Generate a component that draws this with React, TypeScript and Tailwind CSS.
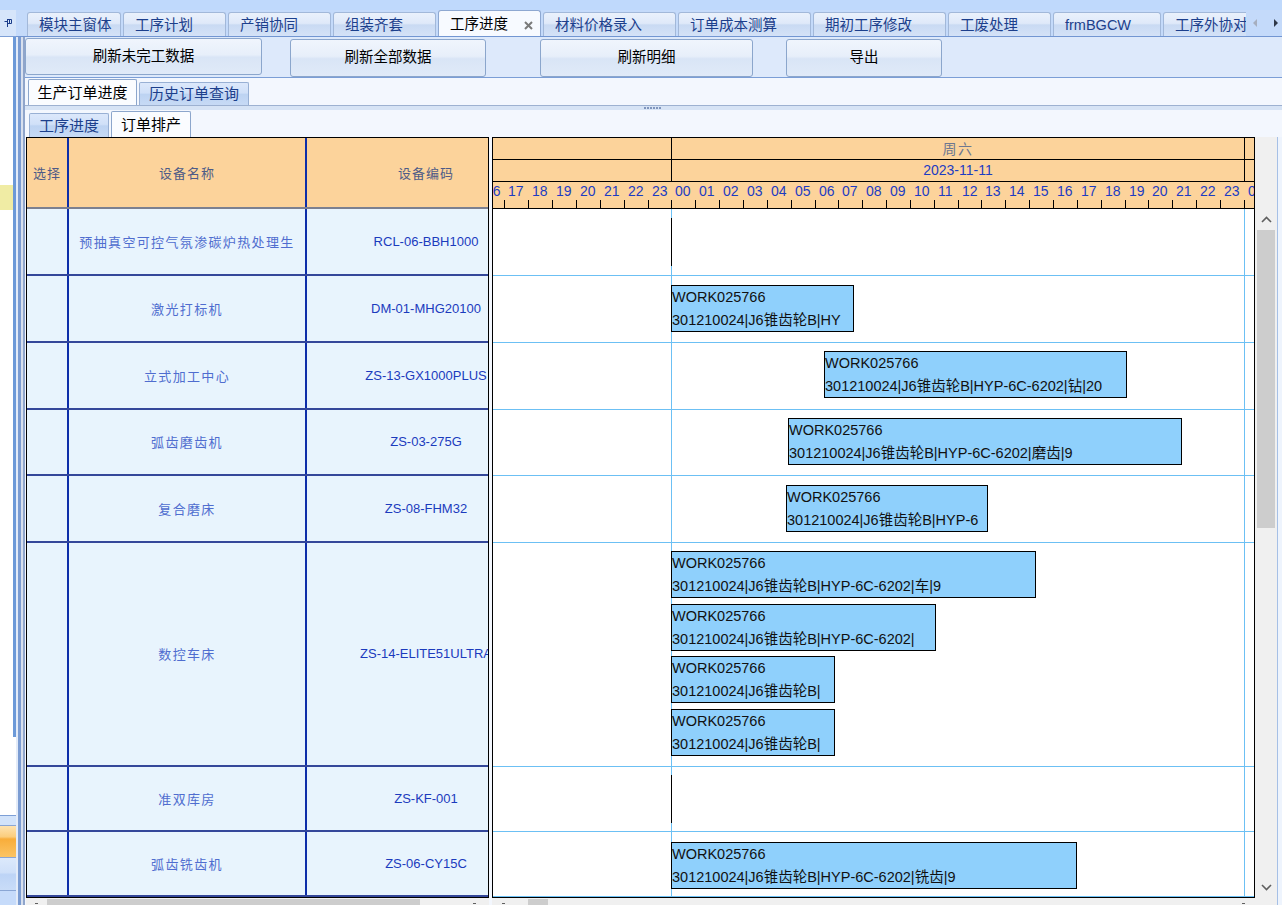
import React from "react";

type Bar = { left: number; width: number; top: number; text?: string };
type Row = { name: string; code: string; h: number; bars: Bar[] };

const ROWS: Row[] = [
  { name: "预抽真空可控气氛渗碳炉热处理生", code: "RCL-06-BBH1000", h: 67, bars: [{ left: 178, width: 0, top: 9 }] },
  { name: "激光打标机", code: "DM-01-MHG20100", h: 67, bars: [{ left: 178, width: 183, top: 9, text: "301210024|J6锥齿轮B|HY" }] },
  { name: "立式加工中心", code: "ZS-13-GX1000PLUS", h: 67, bars: [{ left: 331, width: 303, top: 8, text: "301210024|J6锥齿轮B|HYP-6C-6202|钻|20" }] },
  { name: "弧齿磨齿机", code: "ZS-03-275G", h: 66, bars: [{ left: 295, width: 394, top: 8, text: "301210024|J6锥齿轮B|HYP-6C-6202|磨齿|9" }] },
  { name: "复合磨床", code: "ZS-08-FHM32", h: 67, bars: [{ left: 293, width: 202, top: 9, text: "301210024|J6锥齿轮B|HYP-6" }] },
  {
    name: "数控车床",
    code: "ZS-14-ELITE51ULTRA",
    h: 224,
    bars: [
      { left: 178, width: 365, top: 8, text: "301210024|J6锥齿轮B|HYP-6C-6202|车|9" },
      { left: 178, width: 265, top: 61, text: "301210024|J6锥齿轮B|HYP-6C-6202|" },
      { left: 178, width: 164, top: 113, text: "301210024|J6锥齿轮B|" },
      { left: 178, width: 164, top: 166, text: "301210024|J6锥齿轮B|" },
    ],
  },
  { name: "准双库房", code: "ZS-KF-001", h: 65, bars: [{ left: 178, width: 0, top: 8 }] },
  { name: "弧齿铣齿机", code: "ZS-06-CY15C", h: 65, bars: [{ left: 178, width: 406, top: 10, text: "301210024|J6锥齿轮B|HYP-6C-6202|铣齿|9" }] },
];

const TABS = [
  { t: "模块主窗体", cls: "w-[94px]" },
  { t: "工序计划", cls: "w-[103px]" },
  { t: "产销协同", cls: "w-[103px]" },
  { t: "组装齐套", cls: "w-[103px]" },
  { t: "工序进度", cls: "w-[103px]", active: true },
  { t: "材料价格录入", cls: "w-[133px]" },
  { t: "订单成本测算", cls: "w-[133px]" },
  { t: "期初工序修改", cls: "w-[133px]" },
  { t: "工废处理", cls: "w-[103px]" },
  { t: "frmBGCW", cls: "w-[108px]" },
  { t: "工序外协对账", cls: "w-[120px]" },
];

const HW = 23.85;
const DAY0 = 178.4;
const TICKS: { x: number; label: string }[] = [];
for (let k = -8; k <= 24; k++) {
  const hour = ((k % 24) + 24) % 24;
  TICKS.push({ x: Math.round(DAY0 + k * HW), label: String(hour).padStart(2, "0") });
}

const inactiveTab =
  "bg-[linear-gradient(to_bottom,#eaf1fc_0%,#dfe9f9_45%,#c9daf3_52%,#d4e2f7_100%)] border border-b-0 border-[#a2b8d9] text-[#1c3f8c]";
const btn =
  "shrink-0 rounded-[3px] border border-[#8ba6cc] bg-[linear-gradient(to_bottom,#f0f5fd_0%,#e7effa_45%,#d9e5f6_52%,#e0eaf8_100%)] flex items-center justify-center text-[14.5px] text-black";

function Pin() {
  return (
    <svg width="9" height="10" viewBox="0 0 9 10" className="block">
      <path d="M3.5 1v8" stroke="#1b3d8a" strokeWidth="1" />
      <path d="M3.5 1.5h4v4h-4" fill="none" stroke="#1b3d8a" strokeWidth="1" />
      <path d="M5.5 2v3" stroke="#1b3d8a" strokeWidth="1" />
      <path d="M0.5 3.5h3" stroke="#1b3d8a" strokeWidth="1" />
    </svg>
  );
}

function ChevronUp() {
  return (
    <svg width="11" height="7" viewBox="0 0 11 7" className="block">
      <path d="M1 6l4.5-4.5L10 6" fill="none" stroke="#5f5f5f" strokeWidth="1.6" />
    </svg>
  );
}
function ChevronDown() {
  return (
    <svg width="11" height="7" viewBox="0 0 11 7" className="block">
      <path d="M1 1l4.5 4.5L10 1" fill="none" stroke="#5f5f5f" strokeWidth="1.6" />
    </svg>
  );
}

export default function App() {
  return (
    <div className="w-[1282px] h-[905px] overflow-hidden bg-[#c4dafa] flex flex-col font-['Liberation_Sans','Noto_Sans_CJK_SC',sans-serif]">
      <div className="h-[10px] shrink-0 bg-[#bfd9fc]" />
      <div className="flex h-[895px]">
        {/* left docked sidebar */}
        <div className="w-[16px] shrink-0 flex flex-col">
          <div className="h-[27px] shrink-0 bg-[#d6e5fa] border-b border-[#7d9fd6] flex items-center justify-center">
            <Pin />
          </div>
          <div className="h-[700px] shrink-0 bg-white border-r-[3px] border-[#6c99d8] flex flex-col">
            <div className="h-[148px] shrink-0" />
            <div className="h-[25px] shrink-0 bg-[#f0eca4]" />
          </div>
          <div className="h-[78px] shrink-0 bg-white" />
          <div className="h-[90px] shrink-0 flex flex-col">
            <div className="h-px bg-[#7d9fd6]" />
            <div className="h-[9px] bg-[#d2e3fa]" />
            <div className="h-px bg-[#8aa6d4]" />
            <div className="h-[31px] bg-[linear-gradient(to_bottom,#fee3b0_0%,#fbcd7c_35%,#f8ad3a_42%,#fbc464_100%)]" />
            <div className="h-px bg-[#8aa6d4]" />
            <div className="h-[32px] bg-[linear-gradient(to_bottom,#dce9fb_0%,#cfe0f9_45%,#bdd4f6_52%,#c9dcf8_100%)]" />
            <div className="h-px bg-[#8aa6d4]" />
            <div className="h-[14px] bg-[#c6dbfa]" />
          </div>
        </div>

        {/* main */}
        <div className="w-[1266px] shrink-0 flex flex-col">
          {/* top tab strip */}
          <div className="h-[27px] shrink-0 flex border-b border-[#7296d2] pl-[11px]">
            <div className="w-[1219px] shrink-0 overflow-hidden flex items-end gap-[2px]">
              {TABS.map((tab) =>
                tab.active ? (
                  <div
                    key={tab.t}
                    className={`${tab.cls} relative h-[26px] shrink-0 rounded-t-[3px] border border-b-0 border-[#8ea8d1] bg-[#f7faff] flex items-center pl-[11px] pt-[2px] text-[14.5px] text-black whitespace-nowrap`}
                  >
                    {tab.t}
                    <svg width="9" height="9" viewBox="0 0 9 9" className="absolute left-[85px] top-[10px]">
                      <path d="M1 1l7 7M8 1l-7 7" stroke="#7a7a7a" strokeWidth="2" />
                    </svg>
                  </div>
                ) : (
                  <div
                    key={tab.t}
                    className={`${tab.cls} ${inactiveTab} h-[24px] shrink-0 rounded-t-[3px] flex items-center pl-[11px] pt-[2px] text-[14.5px] whitespace-nowrap`}
                  >
                    {tab.t}
                  </div>
                )
              )}
            </div>
            <div className="flex-1 flex items-center pl-[7px]">
              <div className="w-0 h-0 border-y-[4px] border-y-transparent border-r-[4px] border-r-[#a6aebe]" />
              <div className="ml-[17px] w-0 h-0 border-y-[4px] border-y-transparent border-l-[4px] border-l-[#2f3848]" />
            </div>
          </div>

          <div className="flex h-[868px]">
            {/* window edge stripes */}
            <div className="w-[9px] shrink-0 flex">
              <div className="w-[2px] bg-[#e3ebf8]" />
              <div className="w-[3px] bg-[#7b9cd2]" />
              <div className="w-[2px] bg-[#d8e0ee]" />
              <div className="w-[2px] bg-[#8fa5cb]" />
            </div>

            {/* content */}
            <div className="w-[1257px] shrink-0 flex flex-col">
              {/* toolbar */}
              <div className="h-[41px] shrink-0 flex items-start bg-[#dde9fb] border-b border-[#7b9ed6]">
                <div className={`${btn} mt-[1px] h-[37px] w-[237px]`}>刷新未完工数据</div>
                <div className={`${btn} ml-[28px] mt-[2px] h-[38px] w-[196px]`}>刷新全部数据</div>
                <div className={`${btn} ml-[54px] mt-[2px] h-[38px] w-[213px]`}>刷新明细</div>
                <div className={`${btn} ml-[33px] mt-[2px] h-[38px] w-[156px]`}>导出</div>
              </div>

              {/* sub tabs */}
              <div className="h-[28px] shrink-0 bg-[#f3f7fe] border-b border-[#9db1d1] flex items-end pl-[3px] gap-[2px]">
                <div className="w-[109px] h-[26px] shrink-0 rounded-t-[2px] border border-b-0 border-[#8ca6cc] bg-[#fafcff] flex items-center justify-center pt-px text-[15px] text-black">
                  生产订单进度
                </div>
                <div className="w-[110px] h-[23px] shrink-0 rounded-t-[2px] border border-b-0 border-[#98b0d4] bg-[linear-gradient(to_bottom,#dce8fb_0%,#d0e0f8_45%,#bdd3f2_52%,#c7daf5_100%)] flex items-center justify-center pt-px text-[15px] text-[#1c3f8c]">
                  历史订单查询
                </div>
              </div>

              {/* splitter */}
              <div className="h-[4px] shrink-0 bg-[#d6e3f5] flex items-center pl-[619px] gap-[1px]">
                <div className="w-[2px] h-[2px] bg-[#7f95bd]" />
                <div className="w-[2px] h-[2px] bg-[#7f95bd]" />
                <div className="w-[2px] h-[2px] bg-[#7f95bd]" />
                <div className="w-[2px] h-[2px] bg-[#7f95bd]" />
                <div className="w-[2px] h-[2px] bg-[#7f95bd]" />
                <div className="w-[2px] h-[2px] bg-[#7f95bd]" />
              </div>

              {/* inner tabs */}
              <div className="h-[27px] shrink-0 bg-[#f3f7fe] flex items-end pl-[4px] gap-[2px]">
                <div className="w-[80px] h-[24px] shrink-0 rounded-t-[2px] border border-b-0 border-[#98b0d4] bg-[linear-gradient(to_bottom,#dce8fb_0%,#d0e0f8_45%,#bdd3f2_52%,#c7daf5_100%)] flex items-center justify-center pt-px text-[15px] text-[#1c3f8c]">
                  工序进度
                </div>
                <div className="w-[80px] h-[26px] shrink-0 rounded-t-[2px] border border-b-0 border-[#8ca6cc] bg-[#fafcff] flex items-center justify-center pt-px text-[15px] text-black">
                  订单排产
                </div>
              </div>

              {/* grid area */}
              <div className="h-[768px] shrink-0 flex bg-[#f3f7fe] pl-[1px]">
                {/* left grid */}
                <div className="w-[463px] shrink-0 flex flex-col">
                  <div className="h-[761px] shrink-0 border border-black overflow-hidden flex flex-col">
                    <div className="h-[71px] shrink-0 flex bg-[#fcd39b] border-b-2 border-[#7c8090] text-[13px] tracking-[1px] text-[#4e5b87] font-['Noto_Sans_CJK_SC',sans-serif]">
                      <div className="w-[42px] shrink-0 border-r-2 border-[#0d2ea9] flex items-center justify-center">选择</div>
                      <div className="w-[238px] shrink-0 border-r-2 border-[#0d2ea9] flex items-center justify-center">设备名称</div>
                      <div className="w-[238px] shrink-0 flex items-center justify-center">设备编码</div>
                    </div>
                    {ROWS.map((r) => (
                      <div
                        key={r.code}
                        className="flex shrink-0 bg-[#e8f4fd] border-b-2 border-[#34479a]"
                        style={{ height: r.h }}
                      >
                        <div className="w-[42px] shrink-0 border-r-2 border-[#0d2ea9]" />
                        <div className="w-[238px] shrink-0 border-r-2 border-[#0d2ea9] flex items-center justify-center whitespace-nowrap overflow-hidden text-[13px] tracking-[1.35px] text-[#4f6dcf] font-['Noto_Sans_CJK_SC',sans-serif]">
                          {r.name}
                        </div>
                        <div className="w-[238px] shrink-0 flex items-center justify-center whitespace-nowrap text-[13px] text-[#1b3bbd]">
                          {r.code}
                        </div>
                      </div>
                    ))}
                  </div>
                  <div className="h-[7px] shrink-0 bg-[#f0f0f0] flex items-start">
                    <div className="ml-[9px] mt-[5px] w-[3px] h-px bg-[#606060]" />
                    <div className="ml-[9px] mt-px w-[373px] h-[6px] bg-[#cdcdcd]" />
                    <div className="ml-auto mr-[13px] mt-[5px] w-[3px] h-px bg-[#606060]" />
                  </div>
                </div>

                <div className="w-[3px] shrink-0" />

                {/* gantt */}
                <div className="w-[763px] shrink-0 flex flex-col">
                  <div className="h-[761px] shrink-0 border border-black overflow-hidden flex flex-col bg-white">
                    <div className="h-[22px] shrink-0 flex bg-[#fcd39b] border-b border-black">
                      <div className="w-[178px] shrink-0" />
                      <div className="w-[574px] shrink-0 border-x border-black flex items-center justify-center text-[14px] tracking-[1.5px] text-[#6d7790] font-['Noto_Sans_CJK_SC',sans-serif]">
                        周六
                      </div>
                    </div>
                    <div className="h-[22px] shrink-0 flex bg-[#fcd39b] border-b border-black">
                      <div className="w-[178px] shrink-0" />
                      <div className="w-[574px] shrink-0 border-x border-black flex items-center justify-center text-[14px] text-[#1c3cc2]">
                        2023-11-11
                      </div>
                    </div>
                    <div className="h-[27px] shrink-0 relative bg-[#fcd39b] border-b border-black overflow-hidden">
                      {TICKS.map((t, i) => (
                        <React.Fragment key={i}>
                          <div className="absolute top-[18px] h-[8px] w-px bg-black" style={{ left: t.x }} />
                          <div
                            className="absolute top-[1px] leading-[16px] text-[14px] text-[#1c3cc2] whitespace-nowrap"
                            style={{ left: t.x + 4 }}
                          >
                            {t.label}
                          </div>
                        </React.Fragment>
                      ))}
                    </div>
                    <div className="flex-1 relative flex flex-col">
                      <div className="absolute top-0 bottom-0 left-[178px] w-px bg-[#6cc0f4]" />
                      <div className="absolute top-0 bottom-0 left-[751px] w-px bg-[#6cc0f4]" />
                      {ROWS.map((r) => (
                        <div
                          key={r.code}
                          className="relative shrink-0 border-b border-[#6cc0f4]"
                          style={{ height: r.h }}
                        >
                          {r.bars.map((b, i) =>
                            b.width === 0 ? (
                              <div
                                key={i}
                                className="absolute w-px h-[48px] bg-black"
                                style={{ left: b.left, top: b.top }}
                              />
                            ) : (
                              <div
                                key={i}
                                className="absolute h-[47px] border border-black bg-[#8fd0fc] overflow-hidden whitespace-nowrap text-[14.5px] leading-[23px] text-[#111111]"
                                style={{ left: b.left, top: b.top, width: b.width }}
                              >
                                <div>WORK025766</div>
                                <div>{b.text}</div>
                              </div>
                            )
                          )}
                        </div>
                      ))}
                    </div>
                  </div>
                  <div className="h-[7px] shrink-0 bg-[#f0f0f0] flex items-start">
                    <div className="ml-[10px] mt-[5px] w-[3px] h-px bg-[#606060]" />
                    <div className="ml-[23px] mt-px w-[20px] h-[6px] bg-[#cdcdcd]" />
                    <div className="ml-auto mr-[10px] mt-[5px] w-[3px] h-px bg-[#606060]" />
                  </div>
                </div>

                {/* vertical scrollbar */}
                <div className="w-[22px] shrink-0 flex flex-col bg-[#f0f0f0]">
                  <div className="h-[72px] shrink-0" />
                  <div className="h-[21px] shrink-0 flex items-center justify-center">
                    <ChevronUp />
                  </div>
                  <div className="h-[298px] shrink-0 mx-[2px] bg-[#cdcdcd]" />
                  <div className="flex-1" />
                  <div className="h-[20px] shrink-0 flex items-center justify-center">
                    <ChevronDown />
                  </div>
                  <div className="h-[8px] shrink-0" />
                </div>
                <div className="w-px shrink-0 bg-[#a6c0e6]" />
                <div className="flex-1 bg-[#eef4fd]" />
              </div>
            </div>
          </div>
        </div>
      </div>
    </div>
  );
}
